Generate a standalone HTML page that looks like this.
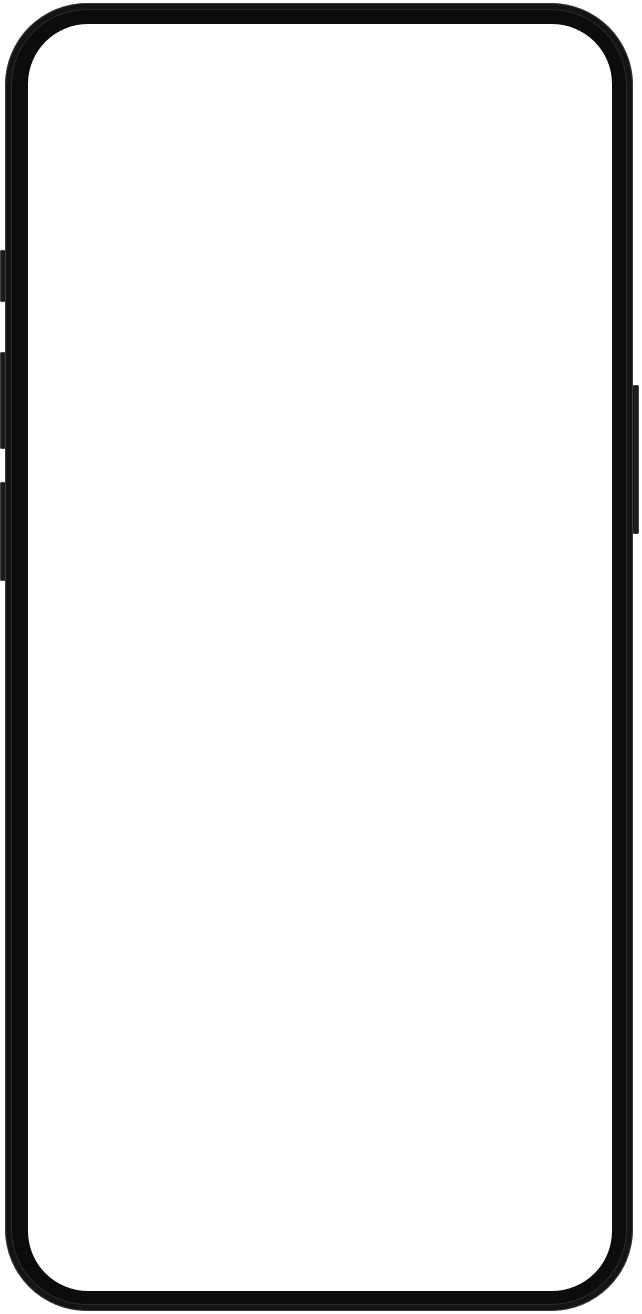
<!DOCTYPE html>
<html><head><style>
html,body{margin:0;padding:0;background:#fff;width:642px;height:1314px;overflow:hidden;position:relative}
.frame{position:absolute;left:5px;top:3px;width:628px;height:1308px;border-radius:82px;background:#141414;box-shadow:inset 0 0 0 1px #3a3a3a}
.band{position:absolute;left:6px;top:6px;right:6px;bottom:6px;border-radius:76px;background:#0c0c0c;box-shadow:inset 0 0 0 1px #2a2a2a}
.screen{position:absolute;left:28px;top:24px;width:584px;height:1267px;border-radius:60px;background:#fff}
.btn{position:absolute;background:#1c1c1c;border-radius:2px;box-shadow:inset 0 0 0 1px #444}
</style></head><body>
<div class="btn" style="left:0;top:250px;width:7px;height:52px"></div>
<div class="btn" style="left:0;top:352px;width:7px;height:97px"></div>
<div class="btn" style="left:0;top:482px;width:7px;height:99px"></div>
<div class="btn" style="left:632px;top:385px;width:7px;height:149px"></div>
<div class="frame"><div class="band"></div></div>
<div class="screen"></div>
</body></html>
